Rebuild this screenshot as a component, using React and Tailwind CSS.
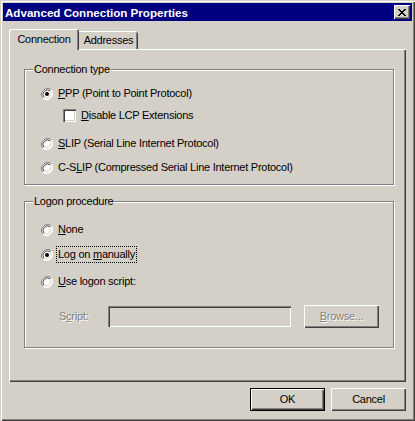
import React from 'react';

const font = "font-['Liberation_Sans',Arial,sans-serif]";

const Radio = ({ checked }) => (
  <svg width="12" height="12" viewBox="0 0 12 12" className="shrink-0">
    <circle cx="6" cy="6" r="5.5" fill="#fff" />
    <path d="M1.8 10.2 A6 6 0 0 1 10.2 1.8" stroke="#808080" strokeWidth="1" fill="none" />
    <path d="M10.2 1.8 A6 6 0 0 1 1.8 10.2" stroke="#fff" strokeWidth="1" fill="none" />
    <path d="M2.8 9.2 A4.6 4.6 0 0 1 9.2 2.8" stroke="#404040" strokeWidth="1" fill="none" />
    <path d="M9.2 2.8 A4.6 4.6 0 0 1 2.8 9.2" stroke="#d4d0c8" strokeWidth="1" fill="none" />
    {checked && <circle cx="6" cy="6" r="2" fill="#000" />}
  </svg>
);

const Checkbox = () => (
  <span className="w-[13px] h-[13px] shrink-0 bg-white shadow-[inset_1px_1px_0_#808080,inset_2px_2px_0_#404040,inset_-1px_-1px_0_#fff,inset_-2px_-2px_0_#d4d0c8]" />
);

const CloseGlyph = () => (
  <svg width="8" height="7" viewBox="0 0 8 7" shapeRendering="crispEdges">
    <path
      fill="#000"
      d="M0 0h2v1H0zM6 0h2v1H6zM1 1h2v1H1zM5 1h2v1H5zM2 2h4v1H2zM3 3h2v1H3zM2 4h4v1H2zM1 5h2v1H1zM5 5h2v1H5zM0 6h2v1H0zM6 6h2v1H6z"
    />
  </svg>
);

const Group = ({ title, className, children }) => (
  <div
    className={`ml-[15px] w-[370px] border border-[#808080] shadow-[inset_1px_1px_0_#fff,1px_1px_0_#fff] flex flex-col ${className}`}
  >
    <span className="-mt-[7px] ml-[8px] self-start h-[13px] leading-[13px] px-[1px] bg-[#d4d0c8]">
      {title}
    </span>
    {children}
  </div>
);

const Button = ({ children, isDefault, disabled, className = '' }) => (
  <div
    className={`w-[75px] h-[23px] flex items-center justify-center bg-[#d4d0c8] ${
      isDefault
        ? 'shadow-[inset_0_0_0_1px_#000,inset_2px_2px_0_#fff,inset_-2px_-2px_0_#404040,inset_-3px_-3px_0_#808080]'
        : 'shadow-[inset_1px_1px_0_#fff,inset_-1px_-1px_0_#404040,inset_-2px_-2px_0_#808080]'
    } ${disabled ? 'text-[#808080] [text-shadow:1px_1px_0_#fff]' : 'text-black'} ${className}`}
  >
    {children}
  </div>
);

export default function App() {
  return (
    <div
      className={`w-[415px] h-[421px] bg-[#d4d0c8] p-[3px] flex flex-col text-[11px] tracking-[-0.25px] text-black ${font} shadow-[inset_1px_1px_0_#d4d0c8,inset_2px_2px_0_#fff,inset_-1px_-1px_0_#404040,inset_-2px_-2px_0_#808080]`}
    >
      {/* title bar */}
      <div className="h-[18px] bg-[#000080] flex items-center justify-between pl-[2px] pr-[2px]">
        <span className="text-white font-bold text-[11.6px] tracking-normal leading-[13px]">
          Advanced Connection Properties
        </span>
        <div className="w-[16px] h-[14px] bg-[#d4d0c8] flex items-center justify-center shadow-[inset_1px_1px_0_#fff,inset_-1px_-1px_0_#404040,inset_-2px_-2px_0_#808080]">
          <CloseGlyph />
        </div>
      </div>

      <div className="flex flex-col px-[6px]">
        {/* tabs */}
        <div className="mt-[8px] flex items-end h-[20px]">
          <div className="relative z-10 -mb-[1px] h-[21px] w-[70px] bg-[#d4d0c8] rounded-tl-[2px] rounded-tr-[2px] flex items-center justify-center pb-[1px] shadow-[inset_1px_1px_0_#fff,inset_-1px_0_0_#404040,inset_-2px_0_0_#808080]">
            Connection
          </div>
          <div className="h-[18px] w-[59px] bg-[#d4d0c8] rounded-tr-[2px] flex items-center justify-center pt-[1px] shadow-[inset_0_1px_0_#fff,inset_-1px_0_0_#404040,inset_-2px_0_0_#808080]">
            Addresses
          </div>
        </div>

        {/* panel */}
        <div className="h-[333px] w-[397px] flex flex-col shadow-[inset_1px_1px_0_#fff,inset_-1px_-1px_0_#404040,inset_-2px_-2px_0_#808080]">
          <Group title="Connection type" className="mt-[20px] h-[116px]">
            <div className="mt-[11px] ml-[16px] h-[13px] flex items-center gap-[5px]">
              <Radio checked />
              <span><u>P</u>PP (Point to Point Protocol)</span>
            </div>
            <div className="mt-[9px] ml-[38px] h-[13px] flex items-center gap-[5px]">
              <Checkbox />
              <span><u>D</u>isable LCP Extensions</span>
            </div>
            <div className="mt-[15px] ml-[16px] h-[13px] flex items-center gap-[5px]">
              <Radio />
              <span><u>S</u>LIP (Serial Line Internet Protocol)</span>
            </div>
            <div className="mt-[11px] ml-[16px] h-[13px] flex items-center gap-[5px]">
              <Radio />
              <span>C-S<u>L</u>IP (Compressed Serial Line Internet Protocol)</span>
            </div>
          </Group>

          <Group title="Logon procedure" className="mt-[16px] h-[147px]">
            <div className="mt-[15px] ml-[16px] h-[13px] flex items-center gap-[5px]">
              <Radio />
              <span><u>N</u>one</span>
            </div>
            <div className="mt-[12px] ml-[16px] h-[13px] flex items-center gap-[3px]">
              <Radio checked />
              <span className="border border-dotted border-black px-[1px] leading-[15px]">
                Log on <u>m</u>anually
              </span>
            </div>
            <div className="mt-[14px] ml-[16px] h-[13px] flex items-center gap-[5px]">
              <Radio />
              <span><u>U</u>se logon script:</span>
            </div>
            <div className="mt-[17px] ml-[34px] h-[23px] flex items-center">
              <span className="w-[49px] text-[#808080] [text-shadow:1px_1px_0_#fff]">
                S<u>c</u>ript:
              </span>
              <div className="w-[183px] h-[21px] bg-[#d4d0c8] shadow-[inset_1px_1px_0_#808080,inset_2px_2px_0_#404040,inset_-1px_-1px_0_#fff,inset_-2px_-2px_0_#d4d0c8]" />
              <Button disabled className="ml-[13px]">
                <span><u>B</u>rowse...</span>
              </Button>
            </div>
          </Group>
        </div>

        {/* buttons */}
        <div className="mt-[6px] flex justify-end gap-[6px]">
          <Button isDefault>OK</Button>
          <Button>Cancel</Button>
        </div>
      </div>
    </div>
  );
}
